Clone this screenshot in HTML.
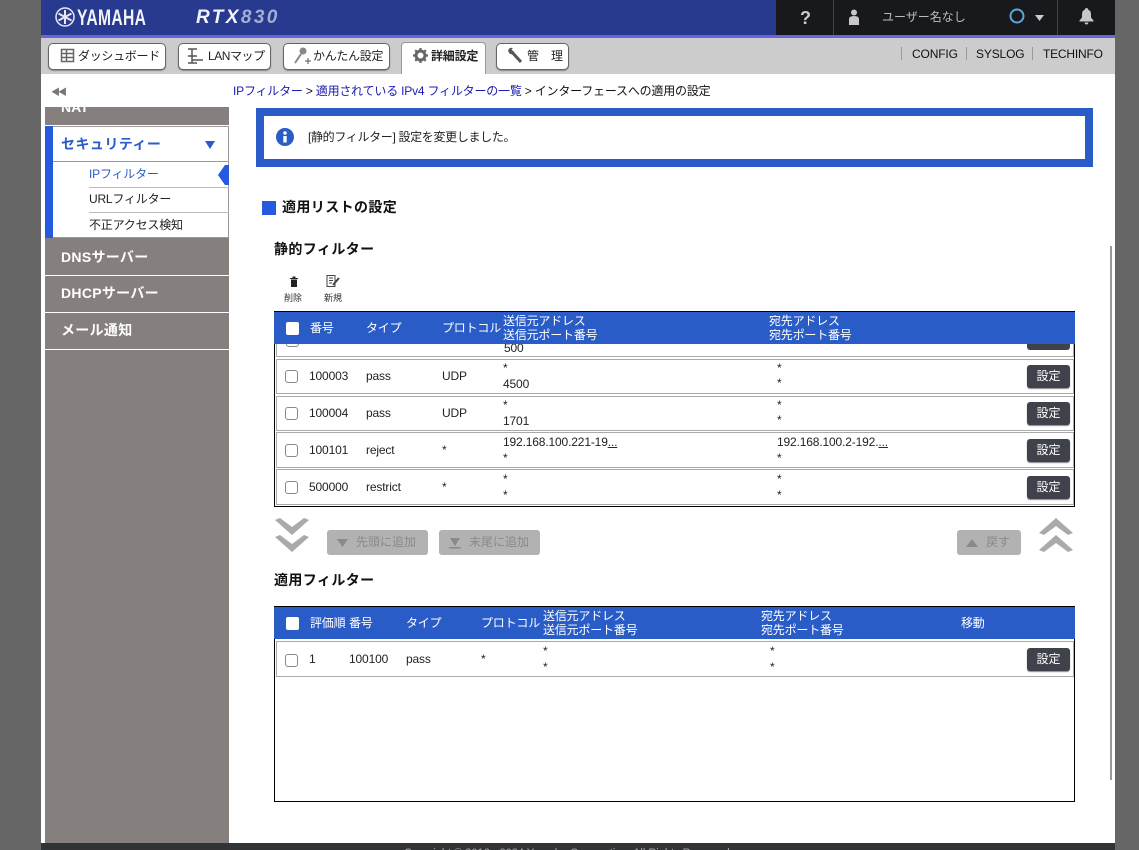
<!DOCTYPE html>
<html lang="ja"><head><meta charset="utf-8"><title>RTX830</title>
<style>
html,body{margin:0;padding:0;width:1139px;height:850px;overflow:hidden;background:#666}
body{position:relative;font-family:"Liberation Sans","Noto Sans CJK JP",sans-serif;font-size:12px;color:#111}
div,span,a{position:absolute;white-space:nowrap;box-sizing:border-box}
.t{line-height:16px}
.nav{top:43px;height:27px;background:#fff;border:1px solid #666;border-radius:5px;box-shadow:0 1px 1px #888;line-height:25px;font-size:12px;color:#222;letter-spacing:-.3px}
.side{left:45px;width:184px;height:36px;background:#85807d;border-bottom:1px solid #fff;color:#fff;font-weight:bold;font-size:14px;line-height:34px;padding-left:16px;letter-spacing:.3px}
.h{font-weight:bold;font-size:14px;color:#111;line-height:18px;letter-spacing:.4px}
.hd{color:#fff;font-size:12px;line-height:14px;letter-spacing:-.2px}
.cb{width:13px;height:13px;background:#fff;border-radius:2px}
.cbo{width:13px;height:13px;background:#fff;border:1px solid #888;border-radius:3px}
.row{left:276px;width:798px;background:#fff;border:1px solid #aaa}
.c{font-size:12px;line-height:14px;color:#222;letter-spacing:-.15px}
.btn{left:1027px;width:43px;height:23px;background:#3f424b;border-radius:3px;box-shadow:0 1px 1px #888;color:#fff;font-size:12px;line-height:22px;text-align:center}
.dis{top:530px;height:25px;background:#b2b2b2;border-radius:3px;color:#8a8a8a;font-size:12px;line-height:25px}
.sub{left:89px;width:140px;height:25px;font-size:12px;line-height:24px;color:#222;border-bottom:1px solid #bbb;letter-spacing:-.2px}
a{color:#1a1ab0;text-decoration:none;position:static}
svg{position:absolute;overflow:visible}
</style></head><body>
<div style="left:41px;top:0;width:1074px;height:850px;background:#fff"></div>
<!-- header -->
<div style="left:41px;top:0;width:1046px;height:35px;background:#273a8f"></div>
<div style="left:776px;top:0;width:311px;height:35px;background:#18191c"></div>
<div style="left:833px;top:0;width:1px;height:35px;background:#444"></div>
<div style="left:1057px;top:0;width:1px;height:35px;background:#444"></div>
<div style="left:41px;top:35px;width:1046px;height:3px;background:#6a64dc"></div>
<div style="left:1087px;top:0;width:28px;height:38px;background:#18191c"></div>
<div style="left:1087px;top:35px;width:28px;height:3px;background:#6a64dc"></div>
<svg style="left:55px;top:7px" width="20" height="20" viewBox="0 0 20 20" fill="none" stroke="#e8e8f0"><circle cx="10" cy="10" r="9" stroke-width="1.5"/><path d="M10 3v14M3.5 6.500l13 7M16.500 6.500l-13 7" stroke-width="2"/></svg>
<div style="left:77px;top:6px;font-size:22px;line-height:24px;font-weight:bold;color:#f2f2fa;transform:scaleX(.71);transform-origin:0 0;letter-spacing:.5px">YAMAHA</div>
<div style="left:196px;top:7px;font-size:19px;line-height:22px;font-weight:bold;font-style:italic;color:#f2f2fa;letter-spacing:2.400px">RTX<span style="position:static;color:#a4aed4">830</span></div>
<div style="left:800px;top:7px;font-size:18px;line-height:22px;font-weight:bold;color:#ccc">?</div>
<svg style="left:848px;top:9px" width="12" height="16" viewBox="0 0 12 16" fill="#c8c8c8"><circle cx="6" cy="3.500" r="3"/><path d="M1 16V10q0-3 5-3t5 3v6z"/></svg>
<div class="t" style="left:882px;top:9px;font-size:12px;color:#bbb">ユーザー名なし</div>
<svg style="left:1009px;top:8px" width="16" height="16"><circle cx="8" cy="8" r="6.500" fill="none" stroke="#5da6dc" stroke-width="2"/></svg>
<svg style="left:1035px;top:15px" width="9" height="6"><path d="M0 0h9L4.500 6z" fill="#ccc"/></svg>
<svg style="left:1079px;top:8px" width="15" height="17" viewBox="0 0 15 17" fill="#c8c8c8"><path d="M7.500 0q1.500 0 1.500 1.500 3 1 3 5v3l2.500 3v1H.5v-1l2.500-3v-3q0-4 3-5Q6 0 7.500 0z"/><path d="M5.500 14.500h4q-.5 2-2 2t-2-2z"/></svg>
<!-- nav -->
<div style="left:41px;top:38px;width:1074px;height:36px;background:#ccc"></div>
<div class="nav" style="left:48px;width:118px;padding-left:29px">ダッシュボード</div>
<svg style="left:61px;top:49px" width="13" height="13" fill="none" stroke="#666"><rect x=".5" y=".5" width="12" height="12" stroke-width="1.500"/><path d="M.5 4.500h12M.5 8.500h12M5.500 1v11" stroke-width="1.500"/></svg>
<div class="nav" style="left:178px;width:93px;padding-left:29px;letter-spacing:-.45px">LANマップ</div>
<svg style="left:187px;top:48px" width="17" height="17" fill="none" stroke="#555" stroke-width="1.500"><path d="M1 1h9M1 8h9M1 15h9M5 1v14M5 12h11"/></svg>
<div class="nav" style="left:283px;width:107px;padding-left:29px">かんたん設定</div>
<svg style="left:293px;top:46px" width="19" height="20" fill="none"><circle cx="10" cy="5" r="3.500" fill="#888"/><path d="M8 8l-6 9" stroke="#888" stroke-width="2"/><path d="M12 15h6M15 12v6" stroke="#555"/></svg>
<div style="left:401px;top:42px;width:85px;height:32px;background:#fff;border:1px solid #999;border-bottom:0;border-radius:4px 4px 0 0;font-weight:bold;font-size:12px;line-height:27px;padding-left:29px;color:#222;letter-spacing:-.2px">詳細設定</div>
<svg style="left:413px;top:48px" width="15" height="15" viewBox="0 0 15 15"><circle cx="7.500" cy="7.500" r="4.500" fill="none" stroke="#666" stroke-width="3"/><path d="M7.500 0v15M0 7.500h15M2.200 2.200l10.600 10.600M12.800 2.200L2.200 12.800" stroke="#666" stroke-width="2.200" stroke-dasharray="2.500 10"/></svg>
<div class="nav" style="left:496px;width:73px;padding-left:30px;letter-spacing:0">管　理</div>
<svg style="left:507px;top:47px" width="17" height="17" fill="none"><path d="M3 3l11 12" stroke="#555" stroke-width="3"/><path d="M1 4q1-4 5-3L4 3l1 2 2-1q0 4-4 3z" fill="#555"/></svg>
<div style="left:901px;top:47px;width:1px;height:13px;background:#999"></div>
<div style="left:966px;top:47px;width:1px;height:13px;background:#999"></div>
<div style="left:1032px;top:47px;width:1px;height:13px;background:#999"></div>
<div class="t" style="left:912px;top:46px;color:#111;letter-spacing:-.15px">CONFIG</div>
<div class="t" style="left:976px;top:46px;color:#111;letter-spacing:-.15px">SYSLOG</div>
<div class="t" style="left:1043px;top:46px;color:#111;letter-spacing:-.2px">TECHINFO</div>
<!-- sidebar -->
<div style="left:51px;top:88px;font-size:9px;line-height:9px;color:#777;letter-spacing:-2px">◀◀</div>
<div style="left:45px;top:107px;width:184px;height:736px;background:#85807d"></div>
<div style="left:61px;top:99px;width:60px;height:16px;overflow:hidden;color:#fff;font-weight:bold;font-size:14px;line-height:16px;clip-path:inset(8px 0 0 0)">NAT</div>
<div style="left:45px;top:125px;width:184px;height:1px;background:#fff"></div>
<div style="left:45px;top:126px;width:184px;height:112px;background:#fff;border:1px solid #999"></div>
<div style="left:45px;top:126px;width:8px;height:112px;background:#2459e0"></div>
<div style="left:53px;top:161px;width:176px;height:1px;background:#999"></div>
<div style="left:61px;top:135px;font-size:14px;line-height:18px;font-weight:bold;color:#2a5cc8;letter-spacing:.45px">セキュリティー</div>
<svg style="left:205px;top:141px" width="10" height="8"><path d="M0 0h10L5 8z" fill="#2a5cc8"/></svg>
<div class="sub" style="top:162px;height:26px;color:#2a5cc8">IPフィルター</div>
<svg style="left:218px;top:165px" width="11" height="20"><path d="M11 0v20H7L0 10 7 0z" fill="#2459e0"/></svg>
<div class="sub" style="top:188px;line-height:23px">URLフィルター</div>
<div class="sub" style="top:213px;border-bottom:0">不正アクセス検知</div>
<div class="side" style="top:239px;height:37px;line-height:36px">DNSサーバー</div>
<div class="side" style="top:276px;height:37px;line-height:35px">DHCPサーバー</div>
<div class="side" style="top:313px;height:37px;line-height:35px">メール通知</div>
<!-- breadcrumb -->
<div class="t" style="left:233px;top:83px;color:#111;letter-spacing:-.2px"><a>IPフィルター</a> &gt; <a>適用されている IPv4 フィルターの一覧</a> &gt; インターフェースへの適用の設定</div>
<!-- message -->
<div style="left:256px;top:108px;width:837px;height:59px;border:8px solid #2a5cc8;background:#fff"></div>
<svg style="left:276px;top:128px" width="18" height="18"><circle cx="9" cy="9" r="9" fill="#2a5cc8"/><circle cx="9" cy="5" r="1.800" fill="#fff"/><rect x="7.300" y="8" width="3.400" height="6.500" fill="#fff"/></svg>
<div class="t" style="left:308px;top:129px;color:#222;letter-spacing:-.33px">[静的フィルター] 設定を変更しました。</div>
<div style="left:262px;top:201px;width:14px;height:14px;background:#2459e0"></div>
<div class="h" style="left:282px;top:198px">適用リストの設定</div>
<div class="h" style="left:274px;top:240px">静的フィルター</div>
<!-- scrollbar -->
<div style="left:1110px;top:246px;width:2px;height:534px;background:#999"></div>
<!-- tools -->
<svg style="left:289px;top:276px" width="10" height="11" viewBox="0 0 10 11"><path d="M1 2h8v1H1zM3.500 .5h3V2h-3zM2 3.500h6V11H2z" fill="#222"/></svg>
<svg style="left:326px;top:275px" width="14" height="12" fill="none" stroke="#444"><path d="M1 .5h8v11H1zM3 3h4M3 5.500h4M3 8h3"/><path d="M13 3L7 10" stroke-width="2"/></svg>
<div style="left:284px;top:292px;font-size:9px;line-height:12px;color:#333">削除</div>
<div style="left:324px;top:292px;font-size:9px;line-height:12px;color:#333">新規</div>
<!-- table 1 -->
<div style="left:274px;top:311px;width:801px;height:196px;border:1px solid #000;border-width:1px 1px 1px 1px;background:#fff;overflow:hidden">
  <div style="left:1px;top:28px;width:798px;height:17px;background:#fff;border:1px solid #aaa;border-width:0 1px 1px 1px"></div>
  <div class="cbo" style="left:11px;top:22px"></div>
  <div class="c" style="left:229px;top:29px;width:30px;height:14px;overflow:hidden">500</div>
  <div style="left:752px;top:28px;width:43px;height:10px;background:#3f424b;border-radius:0 0 3px 3px"></div>
  <div class="c" style="left:502px;top:25px;height:9px;overflow:hidden">*</div>
</div>
<div style="left:274px;top:311px;width:801px;height:33px;background:#2a5cc8;border-top:1px solid #000"></div>
<div class="cb" style="left:286px;top:322px"></div>
<div class="hd" style="left:310px;top:321px">番号</div>
<div class="hd" style="left:366px;top:321px">タイプ</div>
<div class="hd" style="left:442px;top:321px">プロトコル</div>
<div class="hd" style="left:503px;top:314px">送信元アドレス<br>送信元ポート番号</div>
<div class="hd" style="left:769px;top:314px">宛先アドレス<br>宛先ポート番号</div>

<div class="row" style="top:359px;height:35px"></div>
<div class="cbo" style="left:285px;top:370px"></div><div class="c" style="left:309px;top:369px">100003</div><div class="c" style="left:366px;top:369px">pass</div><div class="c" style="left:442px;top:369px">UDP</div><div class="c" style="left:503px;top:361px">*</div><div class="c" style="left:503px;top:377px">4500</div><div class="c" style="left:777px;top:361px">*</div><div class="c" style="left:777px;top:376px">*</div><div class="btn" style="top:365px">設定</div>

<div class="row" style="top:396px;height:35px"></div>
<div class="cbo" style="left:285px;top:407px"></div><div class="c" style="left:309px;top:406px">100004</div><div class="c" style="left:366px;top:406px">pass</div><div class="c" style="left:442px;top:406px">UDP</div><div class="c" style="left:503px;top:398px">*</div><div class="c" style="left:503px;top:414px">1701</div><div class="c" style="left:777px;top:398px">*</div><div class="c" style="left:777px;top:413px">*</div><div class="btn" style="top:402px">設定</div>

<div class="row" style="top:432px;height:36px"></div>
<div class="cbo" style="left:285px;top:444px"></div><div class="c" style="left:309px;top:443px">100101</div><div class="c" style="left:366px;top:443px">reject</div><div class="c" style="left:442px;top:443px">*</div><div class="c" style="left:503px;top:435px">192.168.100.221-19<a style="text-decoration:underline">...</a></div><div class="c" style="left:503px;top:451px">*</div><div class="c" style="left:777px;top:435px">192.168.100.2-192.<a style="text-decoration:underline">...</a></div><div class="c" style="left:777px;top:451px">*</div><div class="btn" style="top:439px">設定</div>

<div class="row" style="top:469px;height:36px"></div>
<div class="cbo" style="left:285px;top:481px"></div><div class="c" style="left:309px;top:480px">500000</div><div class="c" style="left:366px;top:480px">restrict</div><div class="c" style="left:442px;top:480px">*</div><div class="c" style="left:503px;top:472px">*</div><div class="c" style="left:503px;top:488px">*</div><div class="c" style="left:777px;top:472px">*</div><div class="c" style="left:777px;top:488px">*</div><div class="btn" style="top:476px">設定</div>

<!-- arrows -->
<svg style="left:275px;top:518px" width="34" height="34" fill="#aaa"><path d="M0 2L5 0 17 9 29 0 34 2 17 17zM0 19L5 17 17 26 29 17 34 19 17 34z"/></svg>
<svg style="left:1039px;top:518px" width="34" height="34" fill="#aaa"><path d="M0 15L5 17 17 8 29 17 34 15 17 0zM0 32L5 34 17 25 29 34 34 32 17 17z"/></svg>
<div class="dis" style="left:327px;width:101px;padding-left:29px">先頭に追加</div>
<svg style="left:337px;top:539px" width="11" height="8"><path d="M0 0h11L5.500 8z" fill="#8a8a8a"/></svg>
<div class="dis" style="left:439px;width:101px;padding-left:30px">末尾に追加</div>
<svg style="left:449px;top:538px" width="12" height="11" fill="#8a8a8a"><path d="M1 0h10L6 8zM0 9h12v1.500H0z"/></svg>
<div class="dis" style="left:957px;width:64px;padding-left:29px">戻す</div>
<svg style="left:966px;top:539px" width="12" height="8"><path d="M0 8h12L6 0z" fill="#8a8a8a"/></svg>
<!-- table 2 -->
<div class="h" style="left:274px;top:571px">適用フィルター</div>
<div style="left:274px;top:606px;width:801px;height:196px;border:1px solid #000;background:#fff"></div>
<div style="left:274px;top:606px;width:801px;height:33px;background:#2a5cc8;border-top:1px solid #000"></div>
<div class="cb" style="left:286px;top:617px"></div>
<div class="hd" style="left:310px;top:616px">評価順</div>
<div class="hd" style="left:349px;top:616px">番号</div>
<div class="hd" style="left:406px;top:616px">タイプ</div>
<div class="hd" style="left:481px;top:616px">プロトコル</div>
<div class="hd" style="left:543px;top:609px">送信元アドレス<br>送信元ポート番号</div>
<div class="hd" style="left:761px;top:609px">宛先アドレス<br>宛先ポート番号</div>
<div class="hd" style="left:961px;top:616px">移動</div>
<div class="row" style="top:641px;height:36px"></div>
<div class="cbo" style="left:285px;top:654px"></div><div class="c" style="left:309px;top:652px">1</div><div class="c" style="left:349px;top:652px">100100</div><div class="c" style="left:406px;top:652px">pass</div><div class="c" style="left:481px;top:652px">*</div><div class="c" style="left:543px;top:644px">*</div><div class="c" style="left:543px;top:660px">*</div><div class="c" style="left:770px;top:644px">*</div><div class="c" style="left:770px;top:660px">*</div><div class="btn" style="top:648px">設定</div>
<!-- footer -->
<div style="left:41px;top:843px;width:1074px;height:7px;background:#303436;overflow:hidden"><div style="left:363px;top:3px;font-size:11px;line-height:14px;color:#aaa">Copyright © 2016 - 2024 Yamaha Corporation. All Rights Reserved.</div></div>
</body></html>
